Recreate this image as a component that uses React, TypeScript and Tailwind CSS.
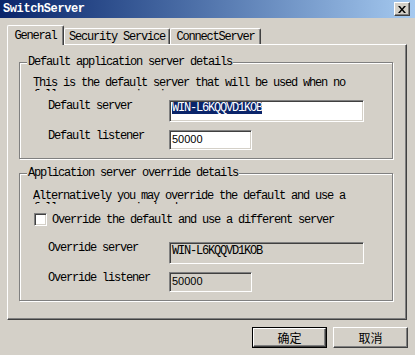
import React from "react";

const sunken =
  "border border-t-[#808080] border-l-[#808080] border-r-white border-b-white shadow-[inset_1px_1px_0_#404040,inset_-1px_-1px_0_#d4d0c8]";
const raised =
  "border border-t-white border-l-white border-r-[#404040] border-b-[#404040] shadow-[inset_-1px_-1px_0_#808080]";

function Group({
  legend,
  h,
  className,
  children,
}: {
  legend: string;
  h: string;
  className?: string;
  children: React.ReactNode;
}) {
  return (
    <div
      className={`relative ml-[11px] w-[374px] border border-[#808080] shadow-[inset_1px_1px_0_#fff,1px_1px_0_#fff] ${h} ${className ?? ""}`}
    >
      <div className="absolute left-[7px] top-[-7px] bg-[#D4D0C8] px-[1px] leading-[12px]">
        {legend}
      </div>
      {children}
    </div>
  );
}

function Row({
  label,
  children,
  className,
}: {
  label: string;
  children: React.ReactNode;
  className?: string;
}) {
  return (
    <div className={`flex items-start ${className ?? ""}`}>
      <div className="ml-[28px] w-[121px] leading-[12px]">{label}</div>
      {children}
    </div>
  );
}

export default function App() {
  return (
    <div
      className="w-[415px] h-[355px] bg-[#D4D0C8] overflow-hidden text-black text-[12px] tracking-[-1.2px] leading-[12px]"
      style={{ fontFamily: '"Liberation Mono", "Noto Sans CJK SC", monospace' }}
    >
      {/* Title bar */}
      <div className="h-[18px] flex items-center justify-between bg-gradient-to-r from-[#0A246A] to-[#A6CAF0] pl-[3px] pr-[5px]">
        <span className="text-white font-bold text-[12px] tracking-[-0.4px] leading-[14px]">
          SwitchServer
        </span>
        <div
          className={`w-[16px] h-[14px] bg-[#D4D0C8] flex items-center justify-center ${raised}`}
        >
          <svg width="8" height="7" viewBox="0 0 8 7">
            <path d="M0 0h2l2 2.5L6 0h2L5 3.5 8 7H6L4 4.5 2 7H0l3-3.5z" fill="#000" />
          </svg>
        </div>
      </div>

      {/* Tabs + panel */}
      <div className="ml-[7px] mt-[7px] w-[400px]">
        <div className="flex items-end h-[19px]">
          <div className="relative z-10 -mb-[1px] h-[20px] w-[57px] bg-[#D4D0C8] border-t border-l border-r border-t-white border-l-white border-r-[#404040] shadow-[inset_-1px_0_0_#808080] rounded-tl-[2px] rounded-tr-[2px] flex justify-center pt-[4px]">
            General
          </div>
          <div className="h-[16px] w-[106px] border-t border-l border-r border-t-white border-l-white border-r-[#404040] shadow-[inset_-1px_0_0_#808080] rounded-tl-[2px] rounded-tr-[2px] flex justify-center pt-[2px]">
            Security Service
          </div>
          <div className="h-[16px] w-[91px] border-t border-l border-r border-t-white border-l-white border-r-[#404040] shadow-[inset_-1px_0_0_#808080] rounded-tl-[2px] rounded-tr-[2px] flex justify-center pt-[2px]">
            ConnectServer
          </div>
        </div>
        <div className={`h-[276px] w-[400px] pt-[17px] ${raised}`}>
          <Group legend="Default application server details" h="h-[97px]">
            <div className="ml-[13px] mt-[14px] w-[330px] h-[14px] overflow-hidden leading-[12px]">
              This is the default server that will be used when no full server name is given.
            </div>
            <Row label="Default server" className="mt-[9px]">
              <div className={`w-[195px] h-[22px] bg-white pl-[2px] pt-[1px] ${sunken}`}>
                <span className="bg-[#0A246A] text-white inline-block leading-[12px]">
                  WIN-L6KQQVD1KOB
                </span>
              </div>
            </Row>
            <Row label="Default listener" className="mt-[8px]">
              <div
                className={`w-[83px] h-[20px] bg-white pl-[2px] pt-[2px] text-[11px] tracking-normal leading-[12px] ${sunken}`}
                style={{ fontFamily: '"Liberation Sans", Arial, sans-serif' }}
              >
                50000
              </div>
            </Row>
          </Group>

          <Group legend="Application server override details" h="h-[128px]" className="mt-[14px]">
            <div className="ml-[13px] mt-[16px] w-[330px] h-[14px] overflow-hidden leading-[12px]">
              Alternatively you may override the default and use a full server name instead.
            </div>
            <div className="flex items-center mt-[9px] ml-[14px]">
              <div className={`w-[13px] h-[13px] bg-white ${sunken}`} />
              <div className="ml-[5px] leading-[12px]">
                Override the default and use a different server
              </div>
            </div>
            <Row label="Override server" className="mt-[16px]">
              <div className={`w-[195px] h-[22px] bg-[#D4D0C8] pl-[2px] pt-[2px] ${sunken}`}>
                WIN-L6KQQVD1KOB
              </div>
            </Row>
            <Row label="Override listener" className="mt-[8px]">
              <div
                className={`w-[83px] h-[20px] bg-[#D4D0C8] pl-[2px] pt-[2px] text-[11px] tracking-normal leading-[12px] ${sunken}`}
                style={{ fontFamily: '"Liberation Sans", Arial, sans-serif' }}
              >
                50000
              </div>
            </Row>
          </Group>
        </div>
      </div>

      {/* Buttons */}
      <div className="flex justify-end gap-[6px] pr-[7px] mt-[7px]">
        <div className="w-[75px] h-[21px] border border-black">
          <div
            className={`w-full h-full flex items-center justify-center tracking-normal ${raised}`}
            style={{ fontFamily: '"Noto Sans CJK SC", sans-serif' }}
          >
            确定
          </div>
        </div>
        <div
          className={`w-[75px] h-[21px] flex items-center justify-center tracking-normal ${raised}`}
          style={{ fontFamily: '"Noto Sans CJK SC", sans-serif' }}
        >
          取消
        </div>
      </div>
    </div>
  );
}
